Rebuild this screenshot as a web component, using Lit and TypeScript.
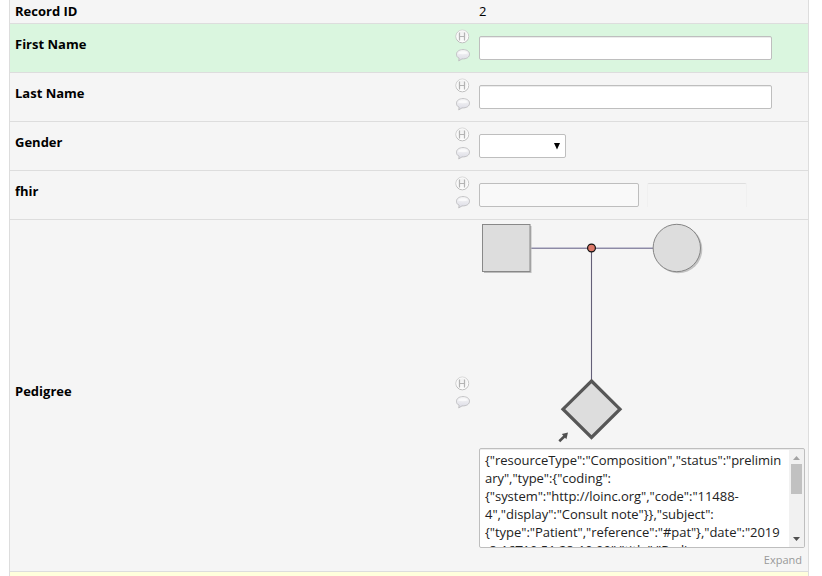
import { LitElement, html, css, svg } from "lit";
import { customElement, property } from "lit/decorators.js";

const RECORD_JSON = [
  '{"resourceType":"Composition","status":"prelimin',
  'ary","type":{"coding":',
  '{"system":"http://loinc.org","code":"11488-',
  '4","display":"Consult note"}},"subject":',
  '{"type":"Patient","reference":"#pat"},"date":"2019',
  '-8-16T10:51:28-10:00","title":"Pedigree',
].join("\n");

@customElement("field-icons")
class FieldIcons extends LitElement {
  static styles = css`
    :host { display: block; width: 18px; height: 37px; }
    svg { display: block; }
  `;
  render() {
    return html`<svg width="18" height="37" viewBox="0 0 18 37">
      <defs>
        <linearGradient id="disc" x1="0" y1="0" x2="0" y2="1">
          <stop offset="0" stop-color="#efefef" /><stop offset="1" stop-color="#fdfdfd" />
        </linearGradient>
        <linearGradient id="rim" x1="0" y1="0" x2="0" y2="1">
          <stop offset="0" stop-color="#d2d2d2" /><stop offset="1" stop-color="#b4b4b4" />
        </linearGradient>
        <linearGradient id="bubble" x1="0" y1="0" x2="0" y2="1">
          <stop offset="0" stop-color="#f8f8f8" /><stop offset="1" stop-color="#dadae4" />
        </linearGradient>
      </defs>
      <circle cx="7.3" cy="7.4" r="6.4" fill="url(#disc)" stroke="url(#rim)" stroke-width="1" />
      <circle cx="7.3" cy="7.4" r="5.5" fill="none" stroke="#fff" stroke-width=".8" />
      <path d="M4.5 3.5V11.5M9.5 3.5V11.5M4.5 7.5H9.5" fill="none" stroke="#b4b4b4" stroke-width="1.2" />
      <path d="M8 20.6C4.1 20.6 1.5 22.6 1.5 25.2C1.5 27.2 2.4 28.6 4.2 29.3L3.7 31.9L7 29.9C11.5 30.2 14.5 28.1 14.5 25.2C14.5 22.5 11.9 20.6 8 20.6Z"
        fill="url(#bubble)" stroke="#bcbcbe" stroke-width=".9" />
      <path d="M3 24.5C4 22 11.8 22 13 24.2C10 25.5 6 25.5 3 24.5Z" fill="#fff" opacity=".65" />
    </svg>`;
  }
}

@customElement("form-row")
class FormRow extends LitElement {
  @property() label = "";
  static styles = css`
    :host {
      box-sizing: border-box; display: grid; grid-template-columns: 445px 24px 1fr;
      height: 49px; border-bottom: 1px solid #ddd; background: #f5f5f5;
    }
    :host([active]) { background: #daf6df; }
    :host([tall]) { height: 352px; }
    .label { padding: 11px 0 0 5px; font-weight: 700; line-height: 18px; }
    .icons { padding-top: 5px; }
    :host([tall]) .label, :host([tall]) .icons { align-self: start; }
    :host([tall]) .label { padding-top: 162px; }
    :host([tall]) .icons { padding-top: 156px; }
  `;
  render() {
    return html`<div class="label">${this.label}</div>
      <div class="icons"><field-icons></field-icons></div>
      <slot></slot>`;
  }
}

@customElement("pedigree-chart")
class PedigreeChart extends LitElement {
  static styles = css`
    :host { display: block; height: 228px; }
    svg { display: block; }
  `;
  render() {
    return html`<svg width="240" height="228" viewBox="479 220 240 228">
      ${svg`
        <path d="M531 247.5H654" stroke="#c4c3d3" />
        <path d="M531 248.5H654" stroke="#8d8aa5" />
        <path d="M591.5 248V381" stroke="#646078" stroke-width="1.1" />
        <rect x="484" y="226" width="47.5" height="47" fill="#bcbcbc" />
        <rect x="482.5" y="224.5" width="47.5" height="47" fill="#ddd" stroke="#888" />
        <circle cx="678.3" cy="249.3" r="24" fill="#c3c3c3" />
        <circle cx="676.8" cy="248" r="23.7" fill="#ddd" stroke="#858585" />
        <circle cx="591.5" cy="248" r="3.9" fill="#dc7868" stroke="#111" stroke-width="1.2" />
        <path d="M591.5 381L620 409.2L591.5 437.4L563 409.2Z" fill="#ddd" stroke="#575757" stroke-width="3.2" />
        <path d="M559.3 441.2L565 435.8" stroke="#505050" stroke-width="2.6" />
        <path d="M561.8 434L568 432.5L566.4 439.3Z" fill="#505050" />
      `}
    </svg>`;
  }
}

@customElement("app-root")
class AppRoot extends LitElement {
  static styles = css`
    :host {
      display: block; height: 576px; overflow: hidden; background: #fff; color: #000;
      font: 13px/18px "Open Sans", sans-serif;
    }
    .table {
      box-sizing: border-box; width: 800px; height: 576px; margin-left: 9px;
      border: solid #ddd; border-width: 0 1px; background: #ffffdc; overflow: hidden;
    }
    .record {
      box-sizing: border-box; display: grid; grid-template-columns: 469px 1fr;
      height: 24px; padding-top: 2px; border-bottom: 1px solid #ddd; background: #f5f5f5;
    }
    .record strong { padding-left: 5px; }
    .field, .select {
      box-sizing: border-box; width: 293px; height: 24px; margin-top: 12px;
      border: 1px solid #bebebe; border-radius: 2px; background: #fff;
      box-shadow: inset 0 1px 0 #ececec;
    }
    .select { display: flex; justify-content: flex-end; width: 87px; padding: 7px 4px 0 0; box-shadow: none; }
    .select svg { display: block; }
    .pair { display: flex; gap: 8px; }
    .pair .field { width: 160px; background: #f9f9f9; box-shadow: none; }
    .ghost {
      box-sizing: border-box; width: 100px; height: 24px; margin-top: 11px;
      border: 1px solid #e0e0e0; border-color: #dfdfdf #f0f0f0 transparent;
      border-bottom: 0; border-radius: 2px 2px 0 0;
    }
    .pair .ghost { margin-top: 12px; }
    .editor {
      box-sizing: border-box; display: flex; width: 326px; height: 100px;
      border: 1px solid #bebebe; border-radius: 2px; background: #fff; overflow: hidden;
      box-shadow: inset 0 1px 0 #ececec;
    }
    .json {
      flex: 1; padding: 2px 0 0 5px; white-space: pre; letter-spacing: -0.035px;
      color: #222; overflow: hidden;
    }
    .scroll {
      display: flex; flex-direction: column; align-items: center; justify-content: space-between;
      width: 15px; margin: 1px 0 0; background: #f1f1f1;
    }
    .scroll svg { display: block; }
    .thumb { width: 11px; height: 30px; margin-bottom: auto; background: #c1c1c1; }
    .expand { padding: 3px 6px 0 0; text-align: right; font-size: 11px; color: #999; }
  `;
  render() {
    return html`<div class="table">
      <div class="record"><strong>Record ID</strong><span>2</span></div>
      <form-row label="First Name" active><div class="field"></div></form-row>
      <form-row label="Last Name"><div class="field"></div></form-row>
      <form-row label="Gender">
        <div class="select"><svg width="8" height="9" viewBox="0 0 8 9"><path d="M1 1H7L4 7.5Z" fill="#000" /></svg></div>
      </form-row>
      <form-row label="fhir"><div class="pair"><div class="field"></div><div class="ghost"></div></div></form-row>
      <form-row label="Pedigree" tall>
        <div>
          <pedigree-chart></pedigree-chart>
          <div class="editor">
            <div class="json">${RECORD_JSON}</div>
            <div class="scroll">
              <svg width="15" height="14" viewBox="0 0 15 14"><path d="M4 10L7.5 6L11 10Z" fill="#a3a3a3" /></svg>
              <div class="thumb"></div>
              <svg width="15" height="15" viewBox="0 0 15 15"><path d="M4 5H11L7.5 9Z" fill="#505050" /></svg>
            </div>
          </div>
          <div class="expand">Expand</div>
        </div>
      </form-row>
    </div>`;
  }
}
